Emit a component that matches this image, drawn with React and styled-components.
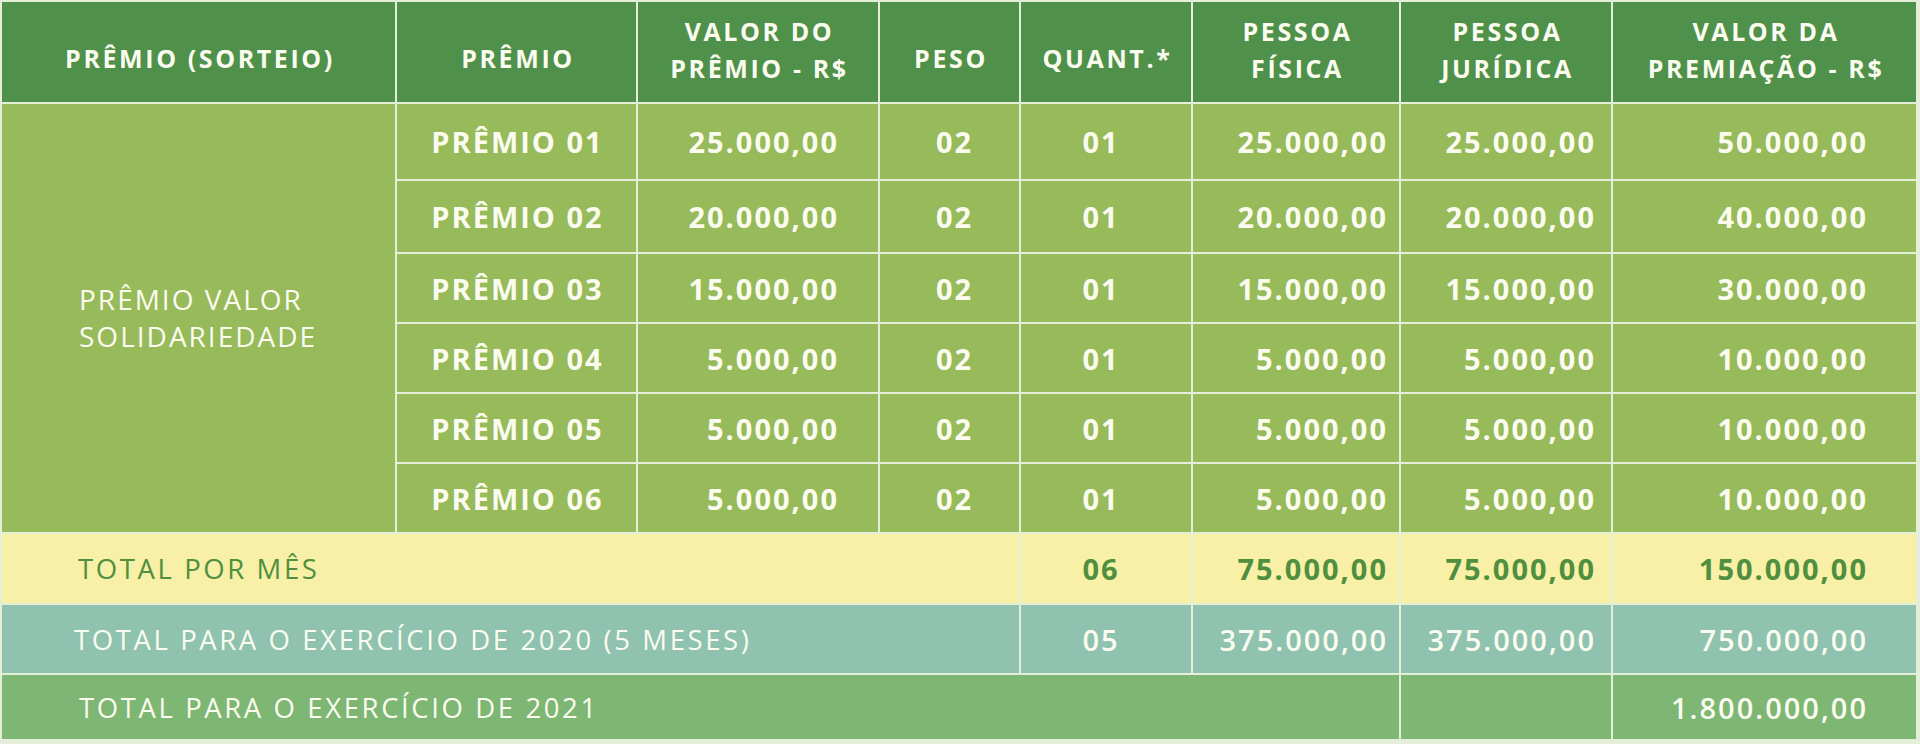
import React from "react";
import styled, { createGlobalStyle, css } from "styled-components";

const GlobalStyle = createGlobalStyle`
  html, body {
    margin: 0;
    padding: 0;
    background: #e4eed8;
  }
  body {
    font-family: "Open Sans", "Liberation Sans", sans-serif;
    -webkit-font-smoothing: antialiased;
  }
`;

const Page = styled.div`
  width: 1920px;
  height: 744px;
  background: #e4eed8;
  overflow: hidden;
`;

const Grid = styled.div`
  display: grid;
  grid-template-columns: 393px 239px 240px 139px 170px 206px 210px 303px;
  grid-template-rows: 100px 75px 71px 68px 68px 68px 68px 69px 68px 64px;
  gap: 2px;
  padding: 2px;
  width: 1918px;
  box-sizing: border-box;
  background: #e4eed8;
`;

const HeadCell = styled.div`
  background: #4f914a;
  color: #fbfcef;
  font-weight: 700;
  font-size: 25px;
  line-height: 37px;
  letter-spacing: 2.6px;
  text-align: center;
  display: flex;
  align-items: center;
  justify-content: center;
  box-sizing: border-box;
  padding-left: 3px;
  ${(p) =>
    p.$single
      ? css`
          padding-top: 12px;
        `
      : css`
          padding-bottom: 5px;
        `}
`;

const rowBg = {
  body: "#97ba5a",
  month: "#f8f0a6",
  year2020: "#8fc2af",
  year2021: "#7eb674",
};

const rowColor = {
  body: "#fbfcef",
  month: "#4f8f3e",
  year2020: "#fbfcef",
  year2021: "#fbfcef",
};

const rowWeight = {
  body: 700,
  month: 700,
  year2020: 600,
  year2021: 600,
};

const Cell = styled.div`
  background: ${(p) => rowBg[p.$tone]};
  color: ${(p) => rowColor[p.$tone]};
  font-weight: ${(p) => rowWeight[p.$tone]};
  font-size: 29px;
  letter-spacing: 2px;
  display: flex;
  align-items: center;
  justify-content: ${(p) =>
    p.$align === "right" ? "flex-end" : p.$align === "left" ? "flex-start" : "center"};
  box-sizing: border-box;
  padding-left: ${(p) => p.$pl || 0}px;
  padding-right: ${(p) => p.$pr || 0}px;
  white-space: nowrap;
`;

const GroupCell = styled.div`
  grid-row: span 6;
  background: #97ba5a;
  color: #fbfcef;
  font-size: 28px;
  font-weight: 400;
  letter-spacing: 2px;
  line-height: 37px;
  display: flex;
  align-items: center;
  padding-left: 77px;
  box-sizing: border-box;
`;

const Label = styled.div`
  grid-column: span ${(p) => p.$span};
  background: ${(p) => rowBg[p.$tone]};
  color: ${(p) => rowColor[p.$tone]};
  font-size: 27.5px;
  font-weight: 400;
  letter-spacing: 2.6px;
  display: flex;
  align-items: center;
  padding-left: ${(p) => p.$pl}px;
  box-sizing: border-box;
  white-space: nowrap;
`;

const prizes = [
  ["PRÊMIO 01", "25.000,00", "02", "01", "25.000,00", "25.000,00", "50.000,00"],
  ["PRÊMIO 02", "20.000,00", "02", "01", "20.000,00", "20.000,00", "40.000,00"],
  ["PRÊMIO 03", "15.000,00", "02", "01", "15.000,00", "15.000,00", "30.000,00"],
  ["PRÊMIO 04", "5.000,00", "02", "01", "5.000,00", "5.000,00", "10.000,00"],
  ["PRÊMIO 05", "5.000,00", "02", "01", "5.000,00", "5.000,00", "10.000,00"],
  ["PRÊMIO 06", "5.000,00", "02", "01", "5.000,00", "5.000,00", "10.000,00"],
];

// alignment per column of the prize rows (columns 2..8)
const colSpec = [
  { align: "center", pl: 2 },
  { align: "right", pr: 39 },
  { align: "center", pl: 10 },
  { align: "center", pr: 10 },
  { align: "right", pr: 11 },
  { align: "right", pr: 15 },
  { align: "right", pr: 48 },
];

const totalSpec = colSpec.slice(3);

export default function App() {
  return (
    <Page>
      <GlobalStyle />
      <Grid>
        <HeadCell $single>PRÊMIO (SORTEIO)</HeadCell>
        <HeadCell $single>PRÊMIO</HeadCell>
        <HeadCell>
          VALOR DO
          <br />
          PRÊMIO - R$
        </HeadCell>
        <HeadCell $single>PESO</HeadCell>
        <HeadCell $single>QUANT.*</HeadCell>
        <HeadCell>
          PESSOA
          <br />
          FÍSICA
        </HeadCell>
        <HeadCell>
          PESSOA
          <br />
          JURÍDICA
        </HeadCell>
        <HeadCell>
          VALOR DA
          <br />
          PREMIAÇÃO - R$
        </HeadCell>

        <GroupCell>
          PRÊMIO VALOR
          <br />
          SOLIDARIEDADE
        </GroupCell>
        {prizes.map((row) =>
          row.map((v, i) => (
            <Cell
              key={row[0] + i}
              $tone="body"
              $align={colSpec[i].align}
              $pl={colSpec[i].pl}
              $pr={colSpec[i].pr}
            >
              {v}
            </Cell>
          ))
        )}

        <Label $span={4} $tone="month" $pl={76}>
          TOTAL POR MÊS
        </Label>
        {["06", "75.000,00", "75.000,00", "150.000,00"].map((v, i) => (
          <Cell
            key={"m" + i}
            $tone="month"
            $align={totalSpec[i].align}
            $pl={totalSpec[i].pl}
            $pr={totalSpec[i].pr}
          >
            {v}
          </Cell>
        ))}

        <Label $span={4} $tone="year2020" $pl={72}>
          TOTAL PARA O EXERCÍCIO DE 2020 (5 MESES)
        </Label>
        {["05", "375.000,00", "375.000,00", "750.000,00"].map((v, i) => (
          <Cell
            key={"y" + i}
            $tone="year2020"
            $align={totalSpec[i].align}
            $pl={totalSpec[i].pl}
            $pr={totalSpec[i].pr}
          >
            {v}
          </Cell>
        ))}

        <Label $span={6} $tone="year2021" $pl={77}>
          TOTAL PARA O EXERCÍCIO DE 2021
        </Label>
        <Cell $tone="year2021" />
        <Cell $tone="year2021" $align="right" $pr={48}>
          1.800.000,00
        </Cell>
      </Grid>
    </Page>
  );
}
